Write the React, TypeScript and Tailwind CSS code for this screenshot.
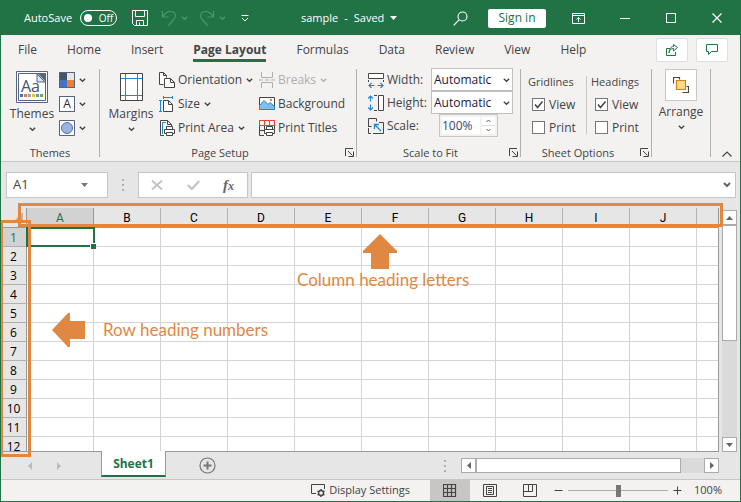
import React from 'react';

const TABS = ['File', 'Home', 'Insert', 'Page Layout', 'Formulas', 'Data', 'Review', 'View', 'Help'];
const COLUMNS = ['A', 'B', 'C', 'D', 'E', 'F', 'G', 'H', 'I', 'J'];
const ROWS = Array.from({ length: 12 }, (_, i) => i + 1);

type IconProps = { w?: number; h?: number; className?: string; children: React.ReactNode };

const Icon = ({ w = 16, h = 16, className = '', children }: IconProps) => (
  <svg
    width={w}
    height={h}
    viewBox={`0 0 ${w} ${h}`}
    fill="none"
    stroke="currentColor"
    aria-hidden="true"
    className={`shrink-0 ${className}`}
  >
    {children}
  </svg>
);

const Chevron = ({ className = '' }: { className?: string }) => (
  <Icon w={7} h={5} className={className}>
    <path d="M.8 .8 3.5 3.3 6.2 .8" strokeWidth="1.4" />
  </Icon>
);

const Launcher = ({ label }: { label: string }) => (
  <button aria-label={label} className="absolute bottom-1 right-0.5">
    <Icon w={9} h={9}>
      <path d="M.5 8V.5H8M3 3l4.5 4.5M8.5 3.5v5h-5" />
    </Icon>
  </button>
);

const Dots = () => (
  <div className="flex flex-col gap-[3px]">
    <span className="size-0.5 bg-[#b0b0b0]" />
    <span className="size-0.5 bg-[#b0b0b0]" />
    <span className="size-0.5 bg-[#b0b0b0]" />
  </div>
);

const Divider = () => <div className="mt-px h-[88px] w-px shrink-0 bg-[#b3b1af]" />;

type GroupProps = { label: string; launcher?: boolean; className: string; children: React.ReactNode };

const Group = ({ label, launcher, className, children }: GroupProps) => (
  <section className={`relative flex shrink-0 flex-col ${className}`}>
    <div className="flex h-[72px]">{children}</div>
    <h2 className="mt-[5px] text-center text-[11px] leading-4">{label}</h2>
    {launcher && <Launcher label={`${label} options`} />}
  </section>
);

type CommandProps = { icon: React.ReactNode; label: string; menu?: boolean; disabled?: boolean };

const Command = ({ icon, label, menu, disabled }: CommandProps) => (
  <button disabled={disabled} className="flex h-6 items-center gap-[3px] whitespace-nowrap disabled:text-[#b1afad]">
    {icon}
    <span>{label}</span>
    {menu && <Chevron className="ml-px" />}
  </button>
);

const CheckRow = ({ label, defaultChecked }: { label: string; defaultChecked?: boolean }) => (
  <label className="flex h-[23px] items-center gap-1 pl-1">
    <span className="grid">
      <input
        type="checkbox"
        defaultChecked={defaultChecked}
        className="peer col-start-1 row-start-1 size-[13px] appearance-none border border-[#767676] bg-white"
      />
      <Icon w={13} h={13} className="invisible col-start-1 row-start-1 peer-checked:visible">
        <path d="M3 6.5 5.5 9.5 10.5 3.5" strokeWidth="1.5" />
      </Icon>
    </span>
    {label}
  </label>
);

const FitSelect = ({ id }: { id: string }) => (
  <div className="relative">
    <select
      id={id}
      className="block h-[23px] w-[82px] appearance-none border border-[#c1bfbd] bg-white pl-0.5 text-[12px] text-[#1b1b3a]"
    >
      <option>Automatic</option>
    </select>
    <Chevron className="pointer-events-none absolute right-[3px] top-[10px]" />
  </div>
);

const TitleBar = () => (
  <header className="flex h-[34px] shrink-0 items-center bg-[#217346] text-[12px] text-white">
    <div className="flex w-[248px] shrink-0 items-center pl-[23px]">
      <label htmlFor="autosave" className="w-[57px] text-[11px]">AutoSave</label>
      <button
        id="autosave"
        role="switch"
        aria-checked="false"
        className="flex h-4 w-[38px] items-center gap-[7px] rounded-full border border-white pl-[3px] text-[10px]"
      >
        <span className="size-2 rounded-full bg-white" />
        Off
      </button>
      <button aria-label="Save" className="ml-[15px]">
        <Icon w={16} h={16}>
          <path d="M.5 .5h15v15H2.5l-2-2zM3.5 .5v6h9v-6M4.5 15.5v-5h7v5M7.5 15.5v-3" />
        </Icon>
      </button>
      <button aria-label="Undo" className="ml-[13px] flex items-center gap-1 text-[#4f9570]">
        <Icon w={16} h={16}>
          <path d="M1.5 1v6h6M1.5 6.5C4 3.5 6.5 1.5 9.5 1.5c3 0 5 2 5 4.5 0 2-1 3-2.5 4.5L7.5 15.5" strokeWidth="1.2" />
        </Icon>
        <Chevron />
      </button>
      <button aria-label="Redo" className="ml-[11px] flex items-center gap-1 text-[#4f9570]">
        <Icon w={16} h={16}>
          <path d="M14.5 1v6h-6M14.5 6.5C12 3.5 9.5 1.5 6.5 1.5c-3 0-5 2-5 4.5 0 2 1 3 2.5 4.5L8.5 15.5" strokeWidth="1.2" />
        </Icon>
        <Chevron />
      </button>
      <button aria-label="Customize Quick Access Toolbar" className="ml-[15px]">
        <Icon w={8} h={7}>
          <path d="M.5 .5h7M1 3l3 3 3-3" />
        </Icon>
      </button>
    </div>
    <button className="ml-[52px] flex items-center gap-1.5 whitespace-nowrap text-[11px]">
      <span className="flex gap-1.5">
        <span>sample</span>
        <span>-</span>
        <span>Saved</span>
      </span>
      <svg width="7" height="4" viewBox="0 0 7 4" fill="white" aria-hidden="true">
        <path d="M0 0h7L3.5 4z" />
      </svg>
    </button>
    <div className="ml-auto flex items-center pr-[18px]">
      <button aria-label="Search" className="mr-5">
        <Icon w={15} h={15}>
          <circle cx="9.5" cy="5.5" r="4.5" strokeWidth="1.1" />
          <path d="M6.3 8.7.7 14.3" strokeWidth="1.2" />
        </Icon>
      </button>
      <button className="mr-[26px] h-[19px] w-[58px] rounded-xs bg-white text-[12px] leading-4 text-[#217346]">
        Sign in
      </button>
      <button aria-label="Ribbon display options" className="mr-[35px]">
        <Icon w={13} h={11}>
          <path d="M.5 .5h12v10H.5zM.5 2.5h12M6.5 9V4.5M4.5 6.5l2-2 2 2" />
        </Icon>
      </button>
      <button aria-label="Minimize" className="mr-9">
        <Icon w={10} h={10}>
          <path d="M0 5.5h10" />
        </Icon>
      </button>
      <button aria-label="Maximize" className="mr-9">
        <Icon w={10} h={10}>
          <path d="M.5 .5h9v9h-9z" />
        </Icon>
      </button>
      <button aria-label="Close">
        <Icon w={10} h={10}>
          <path d="m.5.5 9 9m0-9-9 9" strokeWidth="1.2" />
        </Icon>
      </button>
    </div>
  </header>
);

const TabBar = () => (
  <nav className="flex h-[29px] shrink-0 items-center pl-[17px] pr-3 text-[12px]">
    <div className="flex gap-[30px]">
      {TABS.map((tab) => (
        <button
          key={tab}
          className={
            tab === 'Page Layout'
              ? 'h-[25px] whitespace-nowrap border-b-3 border-[#217346] pt-[3px] font-bold'
              : 'h-[25px] border-b-3 border-transparent pt-[3px]'
          }
        >
          {tab}
        </button>
      ))}
    </div>
    <div className="ml-auto flex gap-2 text-[#217346]">
      <button aria-label="Share" className="flex h-6 w-8 items-center justify-center rounded-xs border border-[#e1dfdd] bg-white">
        <Icon w={12} h={12}>
          <path d="M4 4.5H.5v7h9V8M3 9c.3-3 2-4.5 4.5-4.5V7l4-3.5-4-3v2C5 2.5 3.3 5 3 9z" />
        </Icon>
      </button>
      <button aria-label="Comments" className="flex h-6 w-8 items-center justify-center rounded-xs border border-[#e1dfdd] bg-white">
        <Icon w={12} h={11}>
          <path d="M.5 .5h11v7H5.5l-3 3v-3h-2z" />
        </Icon>
      </button>
    </div>
  </nav>
);

const OrientationIcon = () => (
  <Icon>
    <path d="M4.5 12.5h-4V.5h4l3 3v2M4.5.5v3h3" fill="#fff" />
    <path d="M5.5 6.5h6l4 4v5h-10zM11.5 6.5v4h4" fill="#fff" />
  </Icon>
);

const SizeIcon = () => (
  <Icon>
    <path d="M0 4.5h3M0 15.5h3M1.5 4.5v11M4.5 0v3M13.5 0v3M4.5 1.5h9" stroke="#1e88d2" />
    <path d="M4.5 4.5h5l4 4v7h-9zM9.5 4.5v4h4" fill="#fff" />
  </Icon>
);

const PrinterPart = () => (
  <>
    <path d="M7.5 6.5h6v3h-6z" fill="#fff" />
    <path d="M5.5 9.5h10v4h-10z" fill="#fff" />
    <path d="M7.5 12.5h6v3h-6z" fill="#fff" />
  </>
);

const PrintAreaIcon = () => (
  <Icon>
    <path d="M5 15.5H1.5V.5h7l4 4V6M8.5.5v4h4" fill="#fff" />
    <path d="M3.5 14V2.5H7" stroke="#1e88d2" />
    <PrinterPart />
  </Icon>
);

const BreaksIcon = () => (
  <Icon>
    <path d="M2.5 0v5.5h11V0M2.5 16v-5.5h11V16M0 8h4M6 8h4M12 8h4" />
  </Icon>
);

const BackgroundIcon = () => (
  <Icon>
    <path d="M.5 1.5h15v12H.5z" fill="#fff" />
    <path d="M.5 9.5 5 4.5l4 4 2-2 4.5 4v3H.5z" fill="#83bdea" stroke="#1e88d2" />
    <path d="M11 3h2v2h-2z" fill="#ed7d31" stroke="none" />
  </Icon>
);

const PrintTitlesIcon = () => (
  <Icon>
    <path d="M.5 6v9.5H5M15.5 6v3M.5 10.5H6M5.5 5v5" />
    <path d="M.5 .5h15v5H.5zM5.5.5v5M10.5.5v5" fill="#fff" stroke="#e8403a" strokeWidth="1.2" />
    <PrinterPart />
  </Icon>
);

const Ribbon = () => (
  <div className="flex shrink-0 border-b border-[#c8c6c4] pt-1 text-[12px]">
    <Group label="Themes" className="w-[98px]">
      <button className="ml-[9px] flex w-[44px] flex-col items-center pt-[3px]">
        <Icon w={32} h={32}>
          <path d="M.5 .5h31v31H.5z" fill="#fff" stroke="#55657f" />
          <path d="M2.5 2.5h20l7 7v20h-27z" fill="#fff" stroke="#55657f" />
          <path d="M21 2h9v9z" fill="#55657f" stroke="none" />
          <path d="M21 3v8h8z" fill="#dde3ec" stroke="#55657f" />
          <text x="5" y="21" fontSize="16" fontFamily="Open Sans, sans-serif" fill="#44546a" stroke="none">Aa</text>
          <g stroke="none">
            <path d="M4 23h3v3H4z" fill="#4472c4" />
            <path d="M8 23h3v3H8z" fill="#ed7d31" />
            <path d="M12 23h3v3h-3z" fill="#a5a5a5" />
            <path d="M16 23h3v3h-3z" fill="#ffc000" />
            <path d="M20 23h3v3h-3z" fill="#5b9bd5" />
            <path d="M24 23h3v3h-3z" fill="#70ad47" />
          </g>
        </Icon>
        <span className="mt-0.5 leading-[18px]">Themes</span>
        <Chevron className="mt-1" />
      </button>
      <div className="ml-[5px] flex flex-col">
        <button aria-label="Theme colors" className="flex h-6 items-center gap-1">
          <Icon>
            <path d="M0 0h16v16H0z" fill="#55657f" stroke="none" />
            <path d="M1 1h7v7H1z" fill="#44546a" stroke="none" />
            <path d="M8 1h7v7H8z" fill="#e7e6e6" stroke="none" />
            <path d="M1 8h7v7H1z" fill="#4472c4" stroke="none" />
            <path d="M8 8h7v7H8z" fill="#ed7d31" stroke="none" />
          </Icon>
          <Chevron />
        </button>
        <button aria-label="Theme fonts" className="flex h-6 items-center gap-1">
          <span className="flex size-4 items-center justify-center border border-[#55657f] bg-white text-[12px] leading-3 text-[#2b2b3d]">
            A
          </span>
          <Chevron />
        </button>
        <button aria-label="Theme effects" className="flex h-6 items-center gap-1">
          <Icon>
            <path d="M.5 .5h15v15H.5z" fill="#fff" stroke="#55657f" />
            <circle cx="8" cy="8" r="5.5" fill="#9fb3e0" stroke="#4472c4" />
          </Icon>
          <Chevron />
        </button>
      </div>
    </Group>
    <Divider />
    <Group label="Page Setup" launcher className="w-[256px] pr-4">
      <button className="ml-[9px] flex w-[44px] flex-col items-center pt-[5px]">
        <Icon w={24} h={28}>
          <path d="M1.5 .5h22v27h-22z" fill="#fff" />
          <path d="M6.5 1v26M18.5 1v26M2 5.5h21M2 22.5h21" stroke="#1e88d2" />
        </Icon>
        <span className="mt-1 leading-[18px]">Margins</span>
        <Chevron className="mt-1" />
      </button>
      <div className="ml-1.5 flex w-[100px] shrink-0 flex-col items-start">
        <Command icon={<OrientationIcon />} label="Orientation" menu />
        <Command icon={<SizeIcon />} label="Size" menu />
        <Command icon={<PrintAreaIcon />} label="Print Area" menu />
      </div>
      <div className="flex flex-col items-start">
        <Command icon={<BreaksIcon />} label="Breaks" menu disabled />
        <Command icon={<BackgroundIcon />} label="Background" />
        <Command icon={<PrintTitlesIcon />} label="Print Titles" />
      </div>
    </Group>
    <Divider />
    <Group label="Scale to Fit" launcher className="w-[163px] pr-4">
      <div className="grid grid-cols-[63px_82px] auto-rows-[23px] items-center pl-[11px]">
        <label htmlFor="fit-width" className="flex items-center gap-[3px]">
          <Icon>
            <path d="M.5 1.5h15v5H.5z" fill="#fff" />
            <path d="M.5 8v2M15.5 8v2" />
            <path d="M1 13.5h5.5M9.5 13.5H15M3.5 11 1 13.5 3.5 16M12.5 11l2.5 2.5-2.5 2.5" stroke="#1e88d2" strokeWidth="1.2" />
          </Icon>
          Width:
        </label>
        <FitSelect id="fit-width" />
        <label htmlFor="fit-height" className="flex items-center gap-[3px]">
          <Icon>
            <path d="M10.5.5h5v15h-5z" fill="#fff" />
            <path d="M6 .5h3M6 15.5h3" />
            <path d="M2.5 1v5.5M2.5 9.5V15M0 3.5 2.5 1 5 3.5M0 12.5 2.5 15 5 12.5" stroke="#1e88d2" strokeWidth="1.2" />
          </Icon>
          Height:
        </label>
        <FitSelect id="fit-height" />
        <label htmlFor="fit-scale" className="flex items-center gap-[3px]">
          <Icon>
            <path d="M5 15.5h10.5V4.5H11" />
            <path d="M.5 9V.5h8v3M.5 8.5h3M.5 10v5.5H3" />
            <path d="M13 13 6.5 6.5M6.5 11V6.5H11" stroke="#1e88d2" strokeWidth="1.3" />
          </Icon>
          Scale:
        </label>
        <div className="ml-2 flex h-[23px] w-[59px] border border-[#c8c6c4] bg-[#f3f2f1] p-0.5">
          <input
            id="fit-scale"
            defaultValue="100%"
            className="w-[38px] min-w-0 bg-white text-[12px] text-[#444466]"
          />
          <div className="ml-0.5 flex flex-1 flex-col bg-white text-[#605e5c]">
            <button aria-label="Increase scale" className="flex flex-1 items-center justify-center border-b border-[#e1dfdd]">
              <Icon w={5} h={4}>
                <path d="m.5 3 2-2 2 2" />
              </Icon>
            </button>
            <button aria-label="Decrease scale" className="flex flex-1 items-center justify-center">
              <Icon w={5} h={4}>
                <path d="m.5 1 2 2 2-2" />
              </Icon>
            </button>
          </div>
        </div>
      </div>
    </Group>
    <Divider />
    <Group label="Sheet Options" launcher className="w-[130px] pr-4">
      <fieldset className="w-[65px] shrink-0 pl-[7px] pt-0.5">
        <legend className="float-left h-[23px] w-full text-[11px] leading-6">Gridlines</legend>
        <CheckRow label="View" defaultChecked />
        <CheckRow label="Print" />
      </fieldset>
      <div className="mt-2 h-[58px] w-px shrink-0 bg-[#c8c6c4]" />
      <fieldset className="w-[64px] shrink-0 pl-1 pt-0.5">
        <legend className="float-left h-[23px] w-full text-[11px] leading-6">Headings</legend>
        <CheckRow label="View" defaultChecked />
        <CheckRow label="Print" />
      </fieldset>
    </Group>
    <Divider />
    <div className="flex w-[58px] shrink-0 justify-center">
      <button className="flex flex-col items-center self-start pt-px">
        <span className="flex size-8 items-center justify-center border border-[#c8c6c4] bg-white">
          <Icon>
            <path d="M.5 6.5v-6h6v2M9.5 15.5h6v-6h-2" strokeWidth="1.2" />
            <path d="M3.5 3.5h9v9h-9z" fill="#f9dc8c" stroke="#e07b17" strokeWidth="1.2" />
          </Icon>
        </span>
        <span className="mt-0.5 leading-[18px]">Arrange</span>
        <Chevron className="mt-1" />
      </button>
    </div>
    <Divider />
    <button aria-label="Collapse the ribbon" className="ml-auto mr-2 self-end pb-1">
      <Icon w={10} h={6}>
        <path d="m.5 5.5 4.5-4.5 4.5 4.5" strokeWidth="1.2" />
      </Icon>
    </button>
  </div>
);

const FormulaBar = () => (
  <div className="flex shrink-0 items-center bg-[#e6e6e6] py-2.5 pl-[5px] pr-1 text-[13px] text-[#444]">
    <div className="flex h-[26px] w-[102px] items-center border border-[#c6c6c6] bg-white pl-1.5 pr-[19px]">
      <input aria-label="Name Box" defaultValue="A1" className="w-full min-w-0 bg-transparent" />
      <button aria-label="Name Box menu">
        <svg width="7" height="4" viewBox="0 0 7 4" fill="#777" aria-hidden="true">
          <path d="M0 0h7L3.5 4z" />
        </svg>
      </button>
    </div>
    <div className="flex w-[30px] justify-center">
      <Dots />
    </div>
    <div className="flex h-[26px] w-[110px] items-center border border-[#c6c6c6] bg-white pl-3">
      <button aria-label="Cancel" className="text-[#c0c0c0]">
        <Icon w={12} h={10}>
          <path d="m1 .5 10 9m0-9-10 9" strokeWidth="1.8" />
        </Icon>
      </button>
      <button aria-label="Enter" className="ml-6 text-[#c0c0c0]">
        <Icon w={13} h={10}>
          <path d="m.8 5 4 4L12.2 1" strokeWidth="2" />
        </Icon>
      </button>
      <button aria-label="Insert Function" className="ml-[23px] flex items-baseline font-['Liberation_Serif',serif] font-bold italic leading-5 text-[#666]">
        <span className="text-[15px]">f</span>
        <span className="text-[12px]">x</span>
      </button>
    </div>
    <div className="ml-[3px] flex h-[26px] flex-1 items-center border border-[#c6c6c6] bg-white pr-1">
      <input aria-label="Formula Bar" className="w-full min-w-0 bg-transparent px-1" />
      <button aria-label="Expand Formula Bar" className="text-[#666]">
        <Icon w={8} h={6}>
          <path d="m1 1 3 3 3-3" strokeWidth="2" />
        </Icon>
      </button>
    </div>
  </div>
);

const SheetTable = () => (
  <table className="w-full table-fixed border-separate border-spacing-0 bg-white text-[12px] text-black">
    <thead>
      <tr className="h-5 bg-[#e6e6e6] font-[Roboto,sans-serif]">
        <th className="w-[26px] border-b border-r border-[#999] p-0">
          <svg width="11" height="11" viewBox="0 0 11 11" fill="#b4b4b4" className="ml-[11px]" aria-hidden="true">
            <path d="M11 0v11H0z" />
          </svg>
        </th>
        {COLUMNS.map((col) => (
          <th
            key={col}
            scope="col"
            className={
              col === 'A'
                ? 'w-[67px] border-b border-r border-[#999] bg-[#d2d2d2] p-0 font-normal leading-4 text-[#217346]'
                : 'w-[67px] border-b border-r border-[#999] border-r-[#b1b1b1] p-0 font-normal leading-4'
            }
          >
            {col}
          </th>
        ))}
        <th className="border-b border-[#999] p-0" />
      </tr>
    </thead>
    <tbody>
      {ROWS.map((row) => (
        <tr key={row} className="h-[19px]">
          <th
            scope="row"
            className={
              row === 1
                ? 'border-b border-r border-[#999] border-b-[#b1b1b1] bg-[#d2d2d2] p-0 pt-0.5 font-normal leading-4 text-[#217346]'
                : 'border-b border-r border-[#999] border-b-[#b1b1b1] bg-[#e6e6e6] p-0 pt-0.5 font-normal leading-4'
            }
          >
            {row}
          </th>
          {COLUMNS.map((col) => (
            <td key={col} className="border-b border-r border-[#d4d4d4] p-0" />
          ))}
          <td className="border-b border-[#d4d4d4] p-0" />
        </tr>
      ))}
    </tbody>
  </table>
);

const VerticalScroll = () => (
  <div className="mt-0.5 flex w-[15px] flex-col bg-[#dadada] text-[#666]">
    <button aria-label="Scroll up" className="flex h-[15px] items-center justify-center border border-[#ababab] bg-white">
      <svg width="7" height="4" viewBox="0 0 7 4" fill="currentColor" aria-hidden="true">
        <path d="M0 4h7L3.5 0z" />
      </svg>
    </button>
    <div className="h-[116px] border border-[#ababab] bg-white" />
    <button aria-label="Scroll down" className="mt-auto flex h-[15px] items-center justify-center border border-[#ababab] bg-white">
      <svg width="7" height="4" viewBox="0 0 7 4" fill="currentColor" aria-hidden="true">
        <path d="M0 0h7L3.5 4z" />
      </svg>
    </button>
  </div>
);

// Callouts that explain the row and column headings
const Annotations = () => (
  <div className="pointer-events-none font-[Lato,sans-serif] text-[17px] leading-5 text-[#e08842]">
    <div className="absolute -right-1 -top-[5px] left-[17px] h-6 border-3 border-[#e08842]" />
    <div className="absolute -bottom-[5px] -left-px top-3 w-[31px] border-3 border-[#e08842]" />
    <div className="absolute left-[296px] top-[26px] flex flex-col">
      <svg width="34" height="35" viewBox="0 0 34 35" fill="currentColor" className="ml-[66px]" aria-hidden="true">
        <path d="M17 0 34 17v2h-8v16H8V19H0v-2z" />
      </svg>
      <span className="mt-px whitespace-nowrap">Column heading letters</span>
    </div>
    <div className="absolute left-[51px] top-[105px] flex items-center gap-[18px]">
      <svg width="33" height="34" viewBox="0 0 33 34" fill="currentColor" aria-hidden="true">
        <path d="M0 17 16 0h2v8h15v18H18v8h-2z" />
      </svg>
      <span className="whitespace-nowrap">Row heading numbers</span>
    </div>
  </div>
);

const Grid = () => (
  <main className="flex min-h-0 flex-1 bg-[#e6e6e6] pr-[3px]">
    <div className="relative mr-[3px] min-w-0 flex-1">
      <div className="h-full overflow-hidden border-b border-r border-[#999]">
        <SheetTable />
      </div>
      <div className="absolute left-[25px] top-[19px] h-5 w-[69px] border-2 border-[#217346]">
        <span className="absolute -bottom-1 -right-[3px] size-[6px] border-l border-t border-white bg-[#217346]" />
      </div>
      <Annotations />
    </div>
    <VerticalScroll />
  </main>
);

const SheetBar = () => (
  <div className="flex h-7 shrink-0 items-center border-b border-[#c6c6c6] bg-[#e6e6e6] pr-[21px]">
    <div className="flex w-[100px] shrink-0 items-center gap-[25px] pl-[27px]">
      <button aria-label="Previous sheet">
        <svg width="4" height="8" viewBox="0 0 4 8" fill="#bbb" aria-hidden="true">
          <path d="M4 0v8L0 4z" />
        </svg>
      </button>
      <button aria-label="Next sheet">
        <svg width="4" height="8" viewBox="0 0 4 8" fill="#bbb" aria-hidden="true">
          <path d="M0 0v8l4-4z" />
        </svg>
      </button>
    </div>
    <button className="relative -mt-px h-[26px] w-[65px] self-start border-x border-b-2 border-x-[#999] border-b-[#217346] bg-white pt-0.5 text-[12px] font-bold leading-5 text-[#217346]">
      Sheet1
    </button>
    <button aria-label="New sheet" className="ml-[33px] text-[#777]">
      <Icon w={17} h={17}>
        <circle cx="8.5" cy="8.5" r="7.5" strokeWidth="1.2" />
        <path d="M4.5 8.5h8M8.5 4.5v8" strokeWidth="2" />
      </Icon>
    </button>
    <div className="ml-auto mr-[15px]">
      <Dots />
    </div>
    <div className="flex h-[15px] w-[258px] bg-[#dadada] text-[#666]">
      <button aria-label="Scroll left" className="flex w-[15px] items-center justify-center border border-[#ababab] bg-white">
        <svg width="4" height="7" viewBox="0 0 4 7" fill="currentColor" aria-hidden="true">
          <path d="M4 0v7L0 3.5z" />
        </svg>
      </button>
      <div className="w-[205px] border border-[#ababab] bg-white" />
      <button aria-label="Scroll right" className="ml-auto flex w-[15px] items-center justify-center border border-[#ababab] bg-white">
        <svg width="4" height="7" viewBox="0 0 4 7" fill="currentColor" aria-hidden="true">
          <path d="M0 0v7l4-3.5z" />
        </svg>
      </button>
    </div>
  </div>
);

const StatusBar = () => (
  <footer className="flex h-[21px] shrink-0 items-center justify-end pr-[18px] text-[11px]">
    <button className="mr-5 flex items-center gap-[3px] whitespace-nowrap">
      <Icon w={15} h={13}>
        <path d="M5 9.5H.5v-9h13V5" />
        <circle cx="10" cy="9" r="2.5" strokeWidth="1.4" />
        <path d="M10 5v1.5M10 11.5V13M6.5 7l1.3.8M12.2 10.2l1.3.8M6.5 11l1.3-.8M12.2 7.8l1.3-.8" strokeWidth="1.4" />
      </Icon>
      Display Settings
    </button>
    <button aria-label="Normal view" className="flex h-full w-10 items-center justify-center bg-[#c8c6c4]">
      <Icon w={14} h={13}>
        <path d="M.5 .5h12v12H.5zM4.5.5v12M8.5.5v12M.5 4.5h12M.5 8.5h12" strokeWidth="1.2" />
      </Icon>
    </button>
    <button aria-label="Page layout view" className="flex h-full w-10 items-center justify-center">
      <Icon w={14} h={13}>
        <path d="M.5 .5h13v12H.5zM3.5 2.5h7v8h-7zM5 4.5h4M5 6.5h4M5 8.5h4" />
      </Icon>
    </button>
    <button aria-label="Page break preview" className="flex h-full w-10 items-center justify-center">
      <Icon w={14} h={13}>
        <path d="M.5 .5h13v12H.5zM5.5.5v7M9.5.5v7M.5 7.5h9" />
      </Icon>
    </button>
    <button aria-label="Zoom out" className="ml-1">
      <Icon w={9} h={9}>
        <path d="M.5 4.5h8" />
      </Icon>
    </button>
    <input
      type="range"
      aria-label="Zoom"
      min="0"
      max="100"
      defaultValue="50"
      className="mx-[5px] h-3 w-[100px] appearance-none bg-[linear-gradient(#aaa,#aaa)] bg-[length:100%_1px] bg-center bg-no-repeat [&::-webkit-slider-thumb]:h-3 [&::-webkit-slider-thumb]:w-[5px] [&::-webkit-slider-thumb]:appearance-none [&::-webkit-slider-thumb]:bg-[#777]"
    />
    <button aria-label="Zoom in">
      <Icon w={9} h={9}>
        <path d="M.5 4.5h8M4.5.5v8" />
      </Icon>
    </button>
    <span className="ml-3 w-7 text-right">100%</span>
  </footer>
);

const App = () => (
  <div className="flex h-screen flex-col overflow-hidden border border-[#217346] bg-[#f3f2f1] font-['Open_Sans',sans-serif] text-[#444]">
    <TitleBar />
    <TabBar />
    <Ribbon />
    <FormulaBar />
    <Grid />
    <SheetBar />
    <StatusBar />
  </div>
);

export default App;
